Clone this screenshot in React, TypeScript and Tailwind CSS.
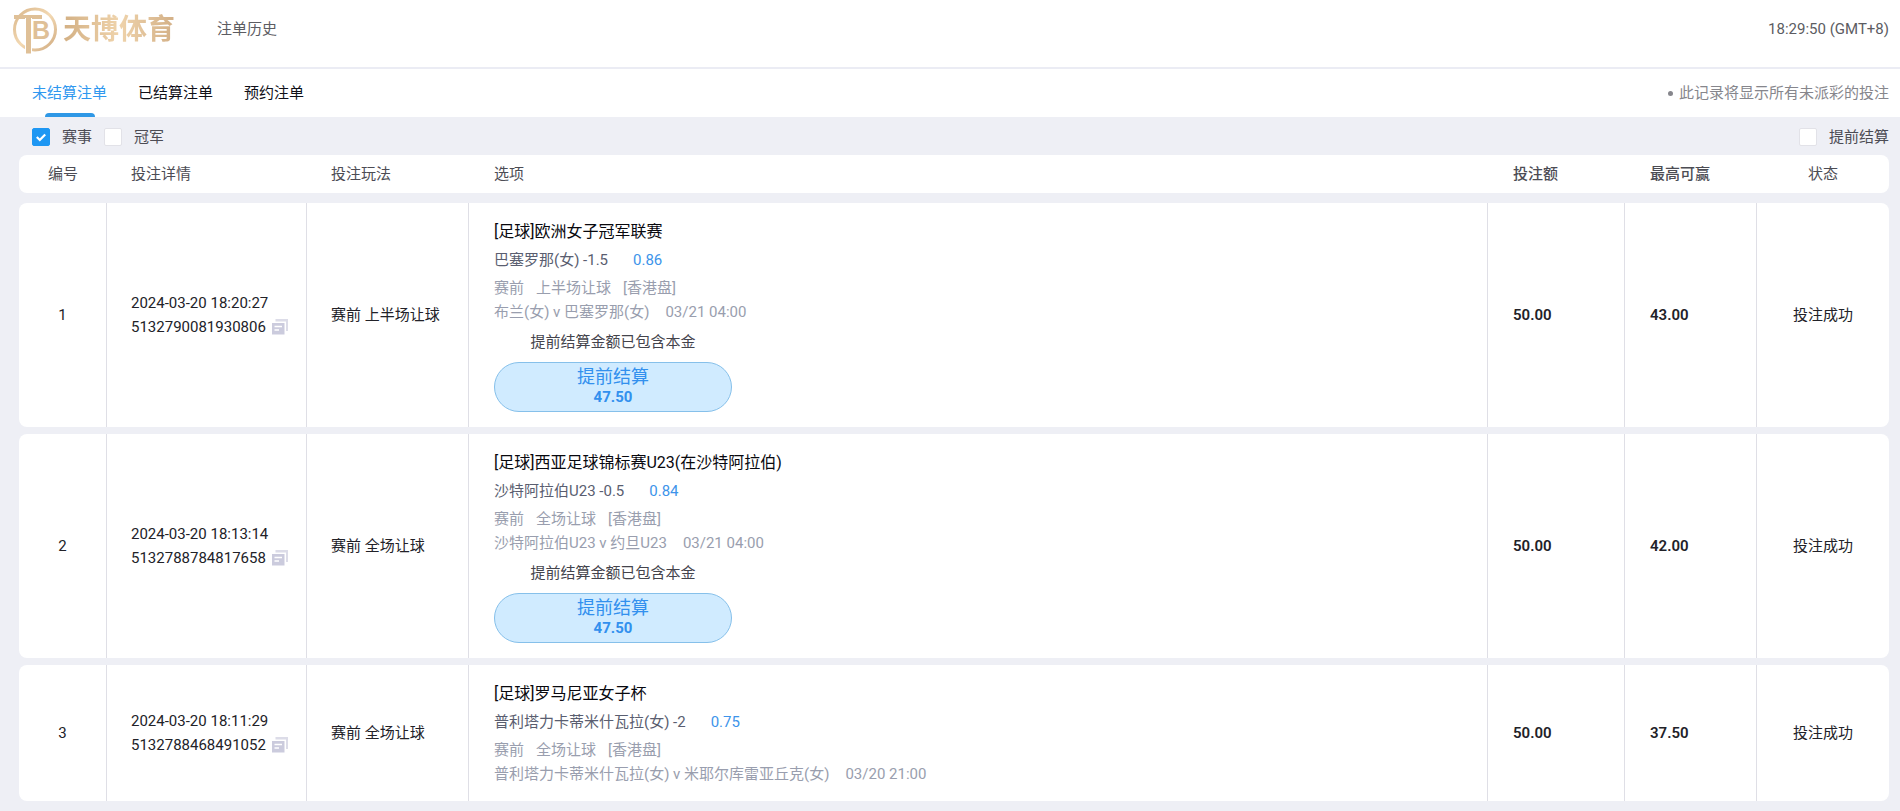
import { useState } from "react";

type Bet = {
  no: number;
  time: string;
  orderId: string;
  play: string;
  league: string;
  pick: string;
  odds: string;
  market: string;
  match: string;
  kickoff: string;
  cashOut?: string;
  stake: string;
  maxWin: string;
};

const TABS = ["未结算注单", "已结算注单", "预约注单"];

const BETS: Bet[] = [
  {
    no: 1,
    time: "2024-03-20 18:20:27",
    orderId: "5132790081930806",
    play: "赛前 上半场让球",
    league: "[足球]欧洲女子冠军联赛",
    pick: "巴塞罗那(女) -1.5",
    odds: "0.86",
    market: "上半场让球",
    match: "布兰(女) v 巴塞罗那(女)",
    kickoff: "03/21 04:00",
    cashOut: "47.50",
    stake: "50.00",
    maxWin: "43.00",
  },
  {
    no: 2,
    time: "2024-03-20 18:13:14",
    orderId: "5132788784817658",
    play: "赛前 全场让球",
    league: "[足球]西亚足球锦标赛U23(在沙特阿拉伯)",
    pick: "沙特阿拉伯U23 -0.5",
    odds: "0.84",
    market: "全场让球",
    match: "沙特阿拉伯U23 v 约旦U23",
    kickoff: "03/21 04:00",
    cashOut: "47.50",
    stake: "50.00",
    maxWin: "42.00",
  },
  {
    no: 3,
    time: "2024-03-20 18:11:29",
    orderId: "5132788468491052",
    play: "赛前 全场让球",
    league: "[足球]罗马尼亚女子杯",
    pick: "普利塔力卡蒂米什瓦拉(女) -2",
    odds: "0.75",
    market: "全场让球",
    match: "普利塔力卡蒂米什瓦拉(女) v 米耶尔库雷亚丘克(女)",
    kickoff: "03/20 21:00",
    stake: "50.00",
    maxWin: "37.50",
  },
];

const ROW =
  "grid grid-cols-[88px_200px_162px_minmax(0,1fr)_137px_132px_132px] rounded-lg bg-white";
const CELL = "flex items-center border-r border-[#dfdfe6]";

function Logo() {
  return (
    <div className="flex items-center gap-[3px]">
      <svg width="50" height="50" viewBox="0 0 50 50" aria-hidden="true">
        <defs>
          <linearGradient id="gold" x1="0" y1="0" x2="1" y2="1">
            <stop offset="0" stopColor="#d9b68a" />
            <stop offset="0.5" stopColor="#f3d9b3" />
            <stop offset="1" stopColor="#d0ab80" />
          </linearGradient>
        </defs>
        <circle cx="25" cy="24.5" r="20.5" fill="none" stroke="url(#gold)" strokeWidth="3" />
        <rect x="4" y="10" width="28" height="4" fill="#dfc097" />
        <rect x="15" y="13" width="7" height="36" fill="#fff" />
        <rect x="16" y="10" width="5" height="38.5" fill="#dfc097" />
        <text
          x="22"
          y="34"
          fontSize="25"
          fontWeight="700"
          fontFamily="'Liberation Sans', sans-serif"
          fill="#dfc097"
        >
          B
        </text>
      </svg>
      <span className="bg-gradient-to-r from-[#d3b084] via-[#efd3ab] to-[#d3b087] bg-clip-text text-[28px] leading-8 font-bold text-transparent">
        天博体育
      </span>
    </div>
  );
}

function CopyIcon() {
  return (
    <svg width="16" height="16" viewBox="0 0 16 16" aria-hidden="true">
      <path d="M3.5 0H16v12h-2V2.5H3.5z" fill="#dcdce8" />
      <path d="M0 4h12.5v11.5H0z" fill="#cbcbdd" />
      <path d="M2.5 7.5h7.5M2.5 11h4.5" stroke="#fff" strokeWidth="1.4" />
    </svg>
  );
}

function Check({
  label,
  checked,
  onChange,
}: {
  label: string;
  checked: boolean;
  onChange: (v: boolean) => void;
}) {
  return (
    <label className="flex cursor-pointer items-center gap-3">
      <span className="relative h-[18px] w-[18px]">
        <input
          type="checkbox"
          checked={checked}
          onChange={(e) => onChange(e.target.checked)}
          className="peer block h-[18px] w-[18px] appearance-none rounded-xs border border-[#e2e2e8] bg-white checked:border-[#1e97f3] checked:bg-[#1e97f3]"
        />
        <svg
          viewBox="0 0 18 18"
          className="pointer-events-none absolute inset-0 hidden peer-checked:block"
          aria-hidden="true"
        >
          <path d="M4.8 9l3 3 5.4-5.6" fill="none" stroke="#fff" strokeWidth="2.2" />
        </svg>
      </span>
      {label}
    </label>
  );
}

function BetRow({ bet }: { bet: Bet }) {
  return (
    <tr className={ROW}>
      <td className={`${CELL} justify-center`}>{bet.no}</td>
      <td className={`${CELL} pl-6`}>
        <div className="leading-6">
          <p>{bet.time}</p>
          <div className="flex items-center gap-1.5">
            <span>{bet.orderId}</span>
            <button type="button" aria-label="复制">
              <CopyIcon />
            </button>
          </div>
        </div>
      </td>
      <td className={`${CELL} pl-6`}>{bet.play}</td>
      <td className={`${CELL} pt-[17px] pb-[15px] pl-[25px]`}>
        <div className="leading-6">
          <p className="text-base text-[#08080e]">{bet.league}</p>
          <p className="mt-1 flex gap-[25px] text-[#5a5e70]">
            <span>{bet.pick}</span>
            <span className="text-[#3d94ea]">{bet.odds}</span>
          </p>
          <p className="mt-1 flex gap-3 text-[#999eae]">
            <span>赛前</span>
            <span>{bet.market}</span>
            <span>[香港盘]</span>
          </p>
          <p className="flex gap-4 text-[#999eae]">
            <span>{bet.match}</span>
            <span>{bet.kickoff}</span>
          </p>
          {bet.cashOut && (
            <div className="mt-1.5 w-[238px] text-center">
              <p className="text-[#44444c]">提前结算金额已包含本金</p>
              <button
                type="button"
                className="mt-2 flex h-[50px] w-full flex-col items-center justify-center rounded-full border border-[#86c0ea] bg-[#d0ebff] text-[#3290ee]"
              >
                <span className="text-lg leading-5">提前结算</span>
                <span className="leading-5 font-bold">{bet.cashOut}</span>
              </button>
            </div>
          )}
        </div>
      </td>
      <td className={`${CELL} pl-[25px] font-semibold`}>{bet.stake}</td>
      <td className={`${CELL} pl-[25px] font-semibold`}>{bet.maxWin}</td>
      <td className="flex items-center justify-center">投注成功</td>
    </tr>
  );
}

export default function App() {
  const [tab, setTab] = useState(0);
  const [match, setMatch] = useState(true);
  const [champion, setChampion] = useState(false);
  const [early, setEarly] = useState(false);

  return (
    <main className="min-h-dvh bg-[#eeeff5] font-['Roboto','Noto_Sans_CJK_SC',sans-serif] text-[15px] text-[#222228]">
      <header className="flex h-[69px] items-center justify-between border-b-2 border-[#ebecf4] bg-white pr-[11px] pb-2 pl-2.5 text-[#5c5c62]">
        <div className="flex items-center gap-[42px]">
          <Logo />
          <h1>注单历史</h1>
        </div>
        <time>18:29:50 (GMT+8)</time>
      </header>

      <nav className="flex h-12 items-center justify-between bg-white pr-[11px] pl-8">
        <div className="flex h-full gap-[31px]">
          {TABS.map((t, i) => (
            <button
              key={t}
              type="button"
              onClick={() => setTab(i)}
              className={
                i === tab
                  ? "relative text-[#2f98ef] after:absolute after:bottom-0 after:left-1/2 after:h-1 after:w-[50px] after:-translate-x-1/2 after:rounded-t-sm after:bg-[#2f98e6]"
                  : "text-[#101018]"
              }
            >
              {t}
            </button>
          ))}
        </div>
        <p className="flex items-center gap-1.5 text-[#86868c]">
          <span className="h-[5px] w-[5px] rounded-full bg-[#86868c]" />
          此记录将显示所有未派彩的投注
        </p>
      </nav>

      <div className="flex h-[38px] items-center justify-between pt-0.5 pr-[11px] pl-8 text-[#4c4c54]">
        <div className="flex gap-3">
          <Check label="赛事" checked={match} onChange={setMatch} />
          <Check label="冠军" checked={champion} onChange={setChampion} />
        </div>
        <Check label="提前结算" checked={early} onChange={setEarly} />
      </div>

      <div className="pr-[11px] pl-[19px]">
        <table className="block">
          <thead className="block">
            <tr className={`${ROW} h-[38px] items-center text-left text-[#4c4c54]`}>
              <th className="text-center font-normal">编号</th>
              <th className="pl-6 font-normal">投注详情</th>
              <th className="pl-6 font-normal">投注玩法</th>
              <th className="pl-[25px] font-normal">选项</th>
              <th className="pl-[25px] font-medium">投注额</th>
              <th className="pl-[25px] font-medium">最高可赢</th>
              <th className="text-center font-normal">状态</th>
            </tr>
          </thead>
          <tbody className="mt-2.5 flex flex-col gap-[7px]">
            {BETS.map((b) => (
              <BetRow key={b.no} bet={b} />
            ))}
          </tbody>
        </table>
      </div>
    </main>
  );
}
